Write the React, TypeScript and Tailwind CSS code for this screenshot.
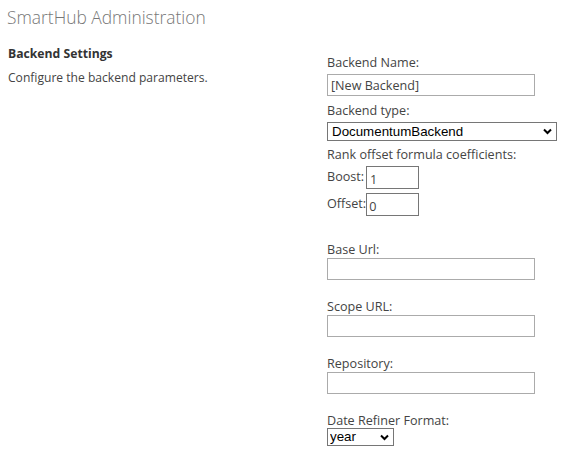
export default function App() {
  const label = "block h-[16px] leading-[16px] text-[12.6px] text-[#444]";
  const box =
    "block h-[22px] w-[208px] border border-[#ababab] bg-white px-[3px] text-[12.6px] text-[#444] outline-none";

  return (
    <div className="min-h-screen bg-white font-['Open_Sans',sans-serif] text-[#444]">
      <h1 className="px-[7px] pt-[5px] text-[17.4px] font-light leading-[24px] text-[#777]">
        SmartHub Administration
      </h1>

      <div className="flex">
        <div className="w-[327px] pl-[8px] pt-[17px]">
          <h2 className="text-[12.2px] font-bold leading-[16px] text-[#333]">Backend Settings</h2>
          <p className="mt-[8px] text-[12.1px] leading-[16px] text-[#444]">
            Configure the backend parameters.
          </p>
        </div>

        <div className="flex flex-col pt-[26px]">
          <span className={label}>Backend Name:</span>
          <input className={`mt-[3px] ${box}`} defaultValue="[New Backend]" />

          <span className={`mt-[7px] ${label}`}>Backend type:</span>
          <div className="relative mt-[3px] w-[230px]">
            <select className="block h-[19px] w-[230px] appearance-none border border-[#767676] bg-white pl-[4px] font-['Liberation_Sans',sans-serif] text-[13.33px] leading-[17px] text-black outline-none">
              <option>DocumentumBackend</option>
            </select>
            <svg
              className="pointer-events-none absolute right-[5px] top-[6px]"
              width="9"
              height="7"
              viewBox="0 0 9 7"
            >
              <path d="M1 1.5 L4.5 5 L8 1.5" fill="none" stroke="#000" strokeWidth="2" />
            </svg>
          </div>

          <span className={`mt-[6px] ${label}`}>Rank offset formula coefficients:</span>
          <div className="mt-[3px] flex items-center">
            <span className="text-[12.6px] text-[#444]">Boost:</span>
            <input
              className="ml-[2px] h-[23px] w-[53px] border border-[#767676] px-[3px] pt-[3px] text-[12.6px] text-[#444] outline-none"
              defaultValue="1"
            />
          </div>
          <div className="mt-[4px] flex items-center">
            <span className="text-[12.6px] text-[#444]">Offset:</span>
            <input
              className="h-[23px] w-[53px] border border-[#767676] px-[2px] pt-[3px] text-[12.6px] text-[#444] outline-none"
              defaultValue="0"
            />
          </div>

          <span className={`mt-[26px] ${label}`}>Base Url:</span>
          <input className={box} />

          <span className={`mt-[19px] ${label}`}>Scope URL:</span>
          <input className={box} />

          <span className={`mt-[19px] ${label}`}>Repository:</span>
          <input className={box} />

          <span className="mt-[19px] h-[15px] text-[12.6px] leading-[15px] text-[#444]">
            Date Refiner Format:
          </span>
          <div className="relative w-[67px]">
            <select className="block h-[18px] w-[67px] appearance-none border border-[#767676] bg-white pl-[2px] font-['Liberation_Sans',sans-serif] text-[13.33px] leading-[16px] text-black outline-none">
              <option>year</option>
            </select>
            <svg
              className="pointer-events-none absolute right-[5px] top-[6px]"
              width="9"
              height="7"
              viewBox="0 0 9 7"
            >
              <path d="M1 1.5 L4.5 5 L8 1.5" fill="none" stroke="#000" strokeWidth="2" />
            </svg>
          </div>
        </div>
      </div>
    </div>
  );
}
